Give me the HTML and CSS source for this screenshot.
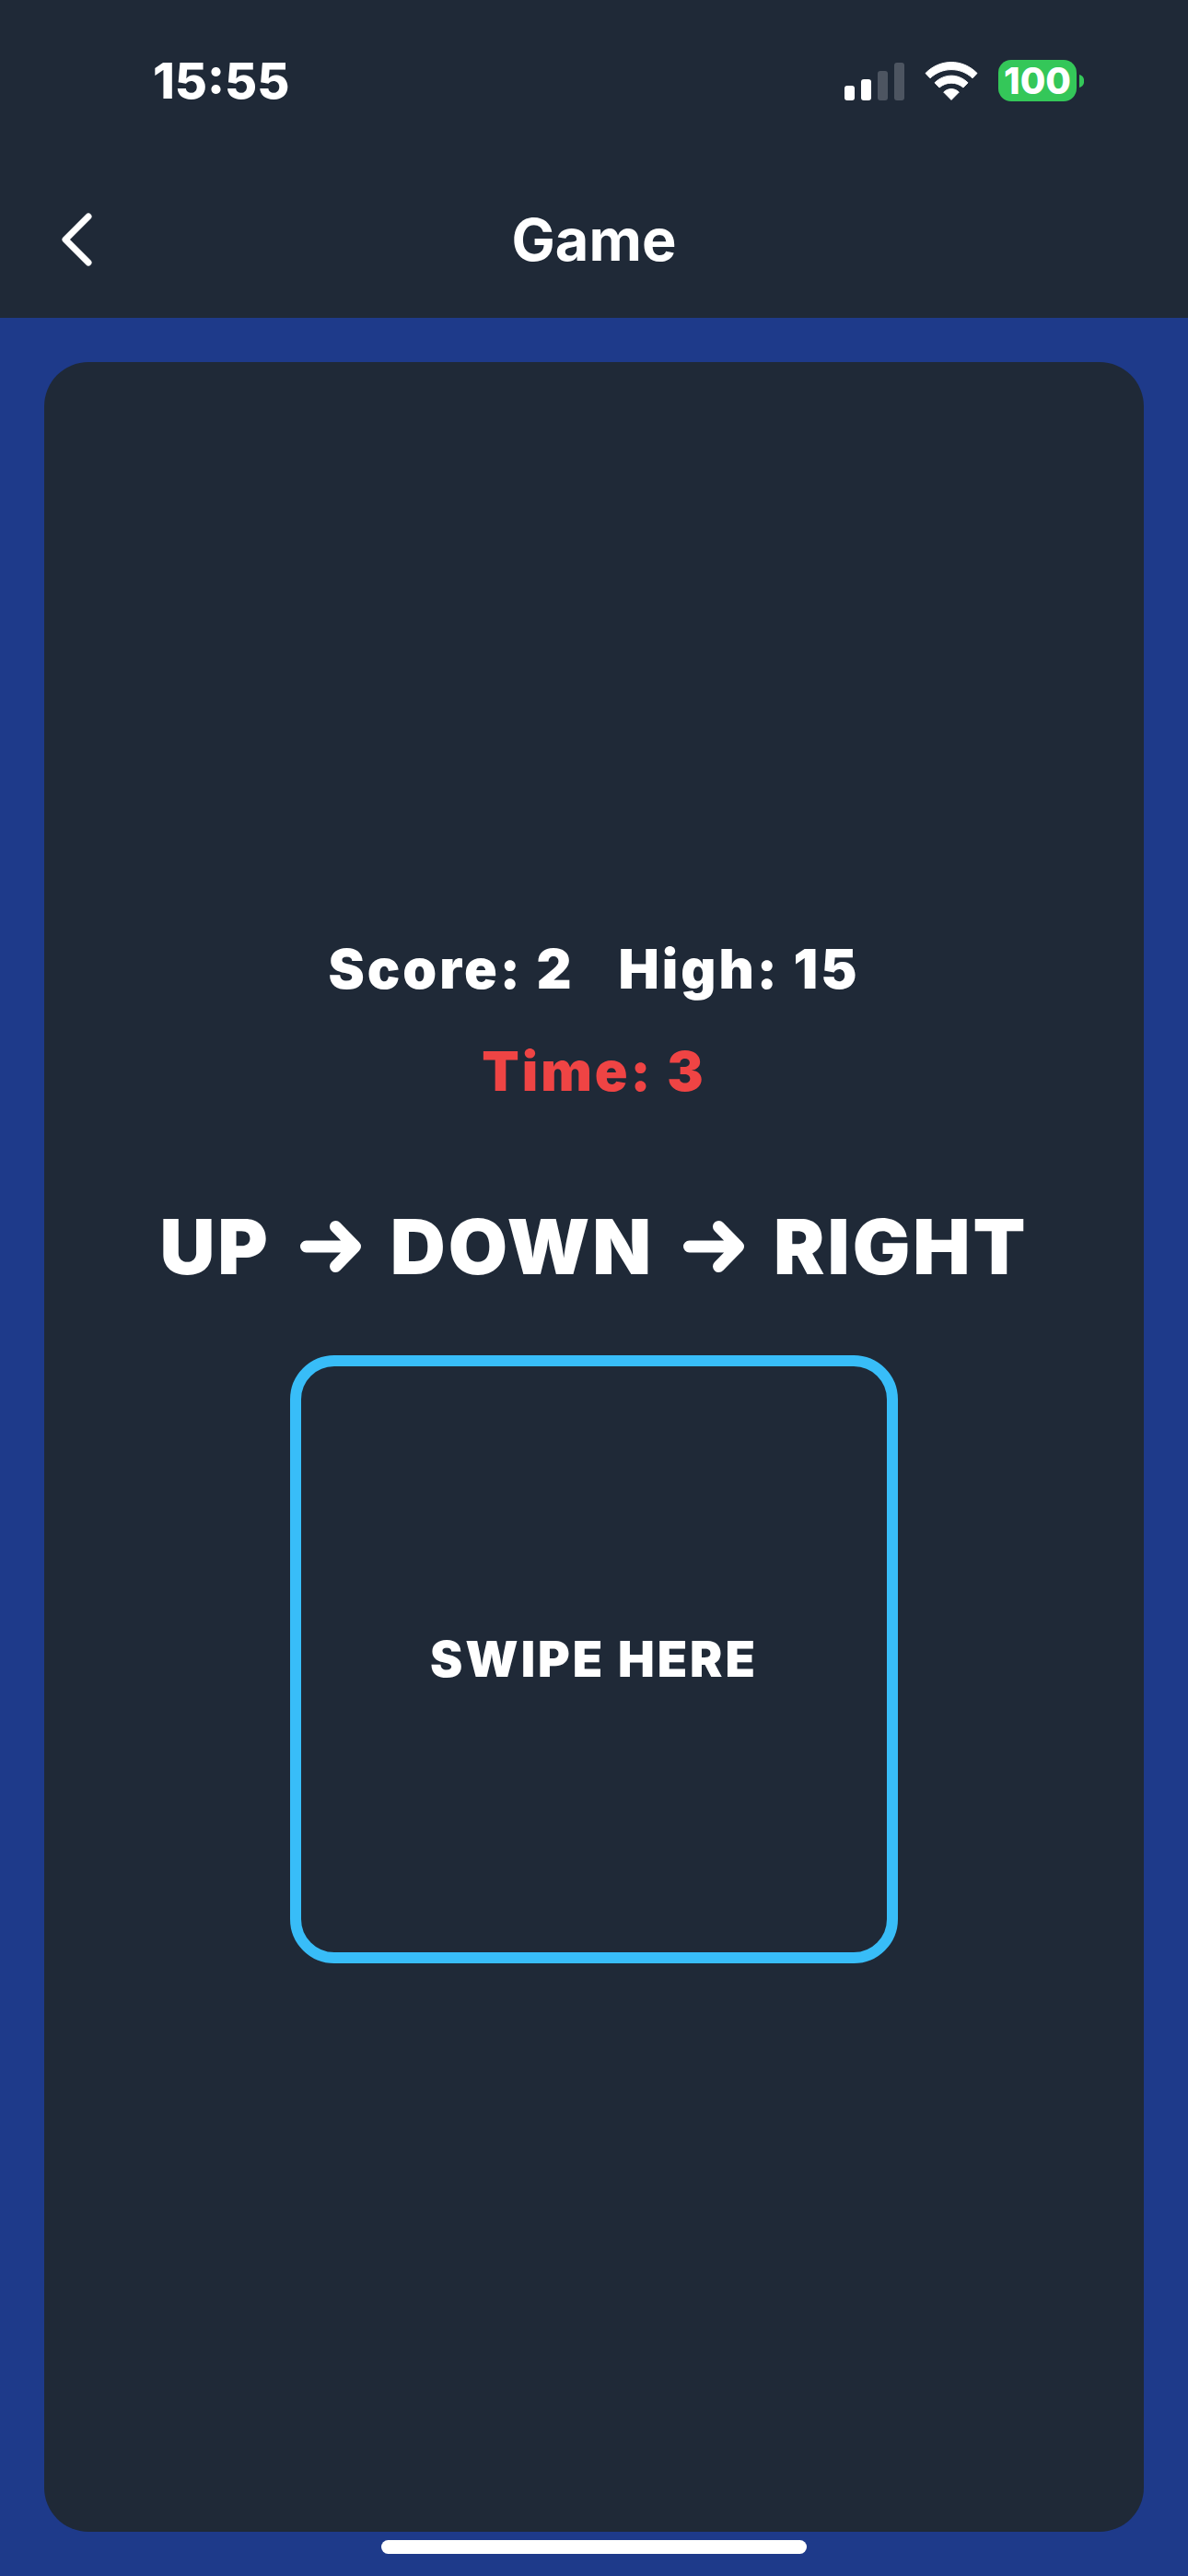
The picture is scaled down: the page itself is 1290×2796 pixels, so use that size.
FILE: index.html
```html
<!DOCTYPE html>
<html lang="en">
<head>
  <meta charset="utf-8">
  <meta name="viewport" content="width=device-width, initial-scale=1">
  <title>Game</title>
  <link rel="stylesheet" href="styles.css">
</head>
<body>
  <header class="header">
    <div class="status">
      <time class="status-time">15:55</time>
      <div class="status-icons">
        <svg class="signal" width="65" height="42" viewBox="0 0 65 42" role="img" aria-label="Signal: 2 of 4 bars">
          <rect x="0" y="26" width="11" height="16" rx="3" fill="#fff"/>
          <rect x="18" y="19" width="11" height="23" rx="3" fill="#fff"/>
          <rect x="36" y="10" width="11" height="32" rx="3" fill="#4d5561"/>
          <rect x="54" y="1" width="11" height="41" rx="3" fill="#4d5561"/>
        </svg>
        <svg class="wifi" width="58" height="42" viewBox="0 0 58 42" role="img" aria-label="Wi-Fi">
          <g fill="#fff" stroke="#fff" stroke-linejoin="round">
            <path stroke-width="1" d="M1 12.500C16.500-3.500 41.500-3.500 57 12.500L52 17.800C39 5.500 19 5.500 6 17.800Z"/>
            <path stroke-width="1" d="M11 22.800C21.500 12.600 36.500 12.600 47 22.800L42 28C34.500 21.500 23.500 21.500 16 28Z"/>
            <path stroke-width="1" d="M20.700 33C25.500 28.400 32.500 28.400 37.300 33L29 41.400Z"/>
          </g>
        </svg>
        <div class="battery" role="img" aria-label="Battery 100%">
          <span class="battery-level">100</span>
          <svg width="5" height="14" viewBox="0 0 5 14" aria-hidden="true"><path d="M0 0C7 1.500 7 12.500 0 14Z" fill="#34c759"/></svg>
        </div>
      </div>
    </div>
    <nav class="nav">
      <button class="back" type="button" aria-label="Back">
        <svg width="34" height="58" viewBox="0 0 34 58" fill="none" stroke="#fff" stroke-width="7" stroke-linecap="round" stroke-linejoin="round"><path d="M30 4L5 29L30 54"/></svg>
      </button>
      <h1 class="title">Game</h1>
    </nav>
  </header>

  <main class="main">
    <section class="card">
      <div class="scores">
        <span>Score: 2</span>
        <span>High: 15</span>
      </div>
      <p class="timer">Time: 3</p>
      <p class="sequence">
        <span>UP</span>
        <svg class="arrow" width="66" height="56" viewBox="0 0 66 56" role="img" aria-label="then"><path d="M6.500 28H58M38.500 6.500L59.500 28L38.500 49.500"/></svg>
        <span>DOWN</span>
        <svg class="arrow" width="66" height="56" viewBox="0 0 66 56" role="img" aria-label="then"><path d="M6.500 28H58M38.500 6.500L59.500 28L38.500 49.500"/></svg>
        <span>RIGHT</span>
      </p>
      <button class="swipe" type="button">SWIPE HERE</button>
    </section>
  </main>

  <footer class="home"><div class="home-indicator"></div></footer>
</body>
</html>
```
FILE: styles.css
```css
* {
  box-sizing: border-box;
}

body {
  display: flex;
  flex-direction: column;
  min-height: 100vh;
  margin: 0;
  background: #1e3a8a;
  color: #fff;
  font-family: Inter, "Liberation Sans", sans-serif;
}

button {
  padding: 0;
  border: 0;
  background: none;
  color: inherit;
  font: inherit;
  letter-spacing: inherit;
  cursor: pointer;
}

.header {
  background: #1f2937;
}

.status {
  display: flex;
  align-items: center;
  justify-content: space-between;
  height: 175px;
  padding: 0 113px 0 166px;
}

.status-time {
  font-size: 54px;
  font-weight: 800;
  line-height: 64px;
}

.status-icons {
  display: flex;
  align-items: center;
  gap: 22px;
}

.battery {
  display: flex;
  align-items: center;
  gap: 3px;
}

.battery-level {
  width: 85px;
  border-radius: 14px;
  background: #34c759;
  font-size: 40px;
  font-weight: 800;
  line-height: 45px;
  text-align: center;
}

.nav {
  display: grid;
  grid-template-columns: 1fr auto 1fr;
  align-items: center;
  height: 170px;
  padding: 0 66px;
}

.back {
  display: flex;
  justify-self: start;
}

.title {
  margin: 0;
  font-size: 63px;
  font-weight: 700;
  line-height: 80px;
}

.main {
  display: flex;
  flex: 1;
  padding: 48px 48px 0;
}

.card {
  display: flex;
  flex: 1;
  flex-direction: column;
  align-items: center;
  justify-content: center;
  border-radius: 48px;
  background: #1f2937;
  font-weight: 900;
  letter-spacing: 3px;
}

.scores {
  display: flex;
  gap: 48px;
}

.scores,
.timer {
  font-size: 59px;
  line-height: 84px;
}

.timer {
  margin: 27px 0 98px;
  color: #ef4444;
}

.sequence {
  display: flex;
  align-items: center;
  gap: 32px;
  margin: 0 0 68px;
  font-size: 83px;
  line-height: 100px;
}

.arrow {
  fill: none;
  stroke: #fff;
  stroke-width: 13px;
  stroke-linecap: round;
  stroke-linejoin: round;
}

.swipe {
  width: 660px;
  max-width: 100%;
  aspect-ratio: 1;
  border: 12px solid #38bdf8;
  border-radius: 48px;
  font-size: 53px;
}

.home {
  display: flex;
  justify-content: center;
  padding: 9px 0 24px;
}

.home-indicator {
  width: 462px;
  height: 15px;
  border-radius: 8px;
  background: #fff;
}
```
